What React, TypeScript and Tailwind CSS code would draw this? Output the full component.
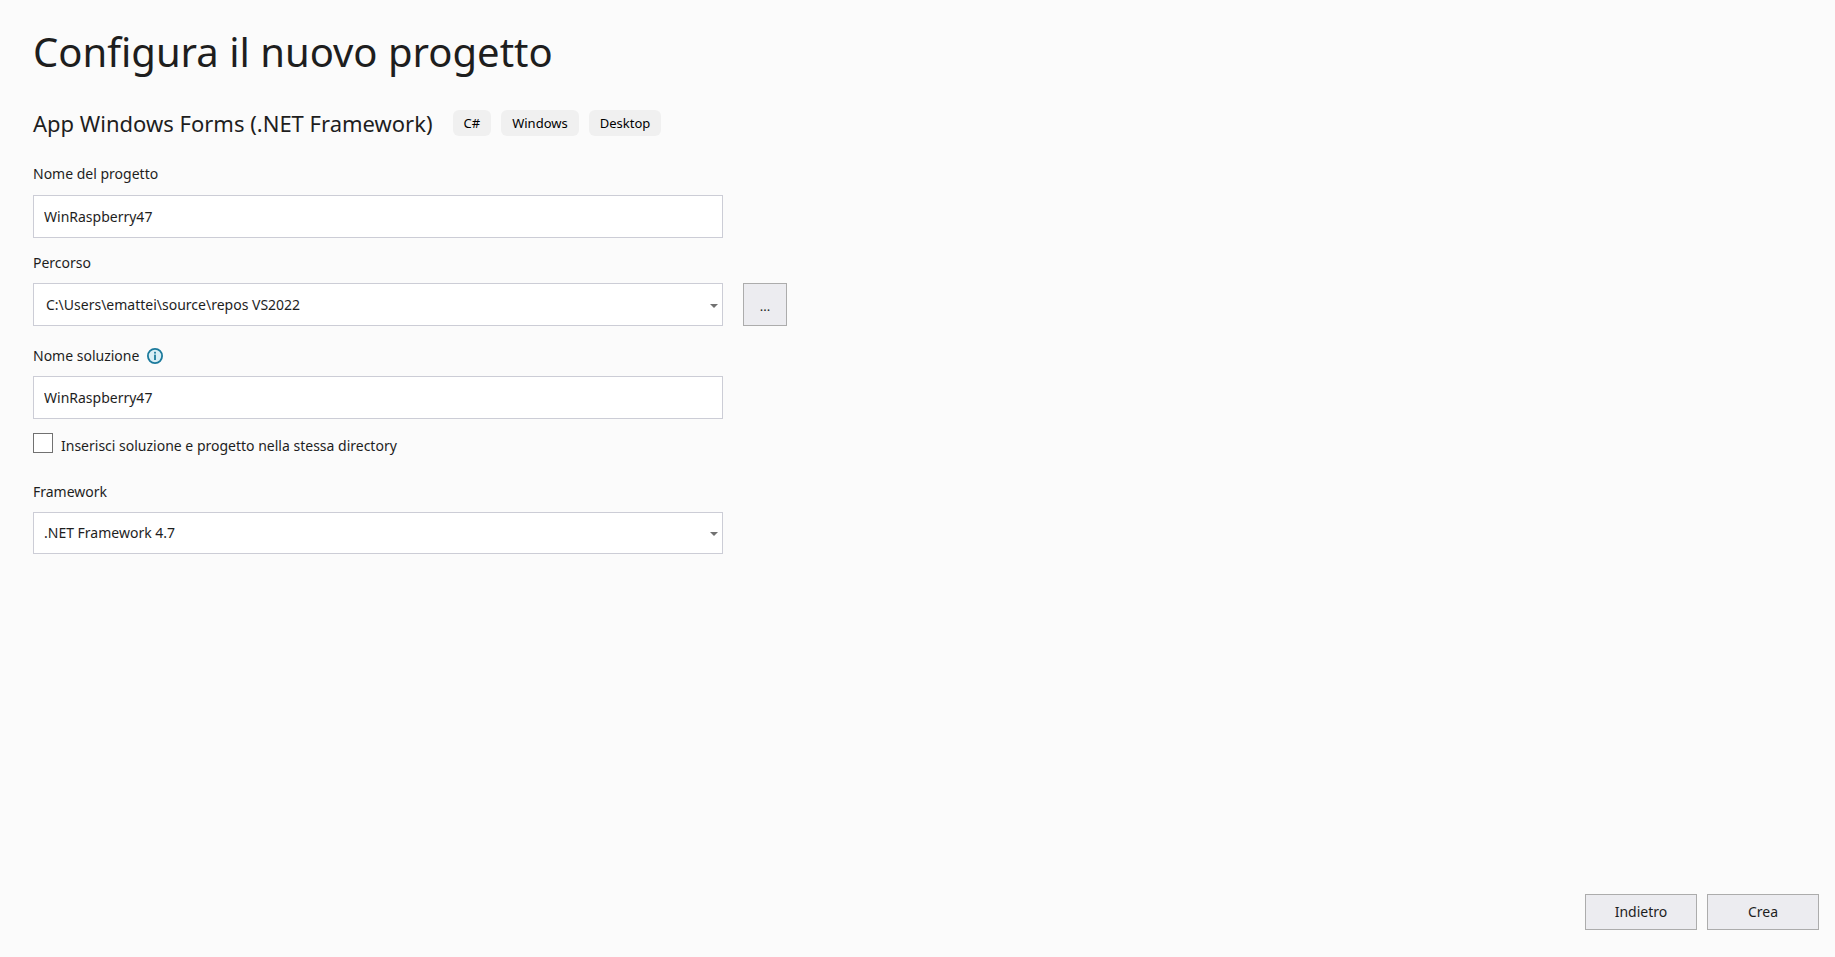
import { useState, type ReactNode } from "react";

const tags = ["C#", "Windows", "Desktop"];

const boxClass =
  "block w-full rounded-none border border-[#cccdd6] bg-white pl-2.5 text-sm leading-5 text-[#1e1e1e] outline-none focus:border-[#7160e8]";

function InfoIcon() {
  return (
    <svg viewBox="0 0 16 16" className="h-4 w-4" aria-hidden="true">
      <circle cx="8" cy="8" r="7.1" fill="#d9eef5" stroke="#1b7a9c" strokeWidth="1.8" />
      <rect x="7.1" y="6.6" width="1.8" height="5.4" fill="#1b7a9c" />
      <rect x="7.1" y="3.8" width="1.8" height="1.8" fill="#1b7a9c" />
    </svg>
  );
}

interface DropDownProps {
  id: string;
  className: string;
  children: ReactNode;
}

function DropDown({ id, className, children }: DropDownProps) {
  return (
    <div className="relative w-full max-w-[690px]">
      <select id={id} className={`${boxClass} appearance-none ${className}`}>
        {children}
      </select>
      {/* Arrow */}
      <svg
        viewBox="0 0 8 4"
        className="pointer-events-none absolute top-1/2 right-[5px] h-1 w-2 -translate-y-px"
        aria-hidden="true"
      >
        <path d="M0 0h8L4 4z" fill="#717171" />
      </svg>
    </div>
  );
}

export default function App() {
  const [projectName, setProjectName] = useState("WinRaspberry47");
  const [solutionName, setSolutionName] = useState("WinRaspberry47");
  const [sameDirectory, setSameDirectory] = useState(false);

  return (
    <div className="flex min-h-screen flex-col bg-[#fbfbfb] font-['Noto_Sans',sans-serif] text-sm leading-5 text-[#1e1e1e]">
      <main className="flex-1 px-[33px] pt-6">
        <h1 className="text-[40px] leading-14">Configura il nuovo progetto</h1>

        {/* Template */}
        <div className="mt-[27px] flex flex-wrap items-center gap-5">
          <h2 className="text-[22px] leading-8">App Windows Forms (.NET Framework)</h2>
          <ul className="flex gap-2.5">
            {tags.map((tag) => (
              <li key={tag} className="rounded-md bg-[#f0f0f0] px-[11px] py-[3px] text-[13px] leading-5 text-black">
                {tag}
              </li>
            ))}
          </ul>
        </div>

        {/* Project name */}
        <label htmlFor="project-name" className="mt-[25px] block">
          Nome del progetto
        </label>
        <input
          id="project-name"
          type="text"
          value={projectName}
          onChange={(e) => setProjectName(e.target.value)}
          className={`${boxClass} mt-[11px] h-[43px] max-w-[690px]`}
        />

        {/* Location */}
        <label htmlFor="location" className="mt-[15px] block">
          Percorso
        </label>
        <div className="mt-2.5 flex gap-5">
          <DropDown id="location" className="h-[43px] pl-3">
            <option>C:\Users\emattei\source\repos VS2022</option>
          </DropDown>
          <button
            type="button"
            aria-label="Sfoglia"
            className="h-[43px] w-11 shrink-0 border border-[#acacac] bg-[#ececf0] pt-0.5 text-[13px]"
          >
            ...
          </button>
        </div>

        {/* Solution name */}
        <div className="mt-5 flex items-center gap-2">
          <label htmlFor="solution-name">Nome soluzione</label>
          <InfoIcon />
        </div>
        <input
          id="solution-name"
          type="text"
          value={solutionName}
          onChange={(e) => setSolutionName(e.target.value)}
          className={`${boxClass} mt-2.5 h-[43px] max-w-[690px]`}
        />

        <div className="mt-3.5 flex gap-2">
          <input
            id="same-directory"
            type="checkbox"
            checked={sameDirectory}
            onChange={(e) => setSameDirectory(e.target.checked)}
            className="h-5 w-5 shrink-0 appearance-none border border-[#717171] bg-white checked:bg-[#5649b0]"
          />
          <label htmlFor="same-directory" className="pt-[3px]">
            Inserisci soluzione e progetto nella stessa directory
          </label>
        </div>

        {/* Framework */}
        <label htmlFor="framework" className="mt-[26px] block">
          Framework
        </label>
        <div className="mt-2.5">
          <DropDown id="framework" className="h-[42px]">
            <option>.NET Framework 4.7</option>
          </DropDown>
        </div>
      </main>

      <footer className="flex justify-end gap-2.5 px-4 pt-6 pb-[27px]">
        <button type="button" className="h-9 w-28 border border-[#acacac] bg-[#ececf0]">
          Indietro
        </button>
        <button type="button" className="h-9 w-28 border border-[#acacac] bg-[#ececf0]">
          Crea
        </button>
      </footer>
    </div>
  );
}
